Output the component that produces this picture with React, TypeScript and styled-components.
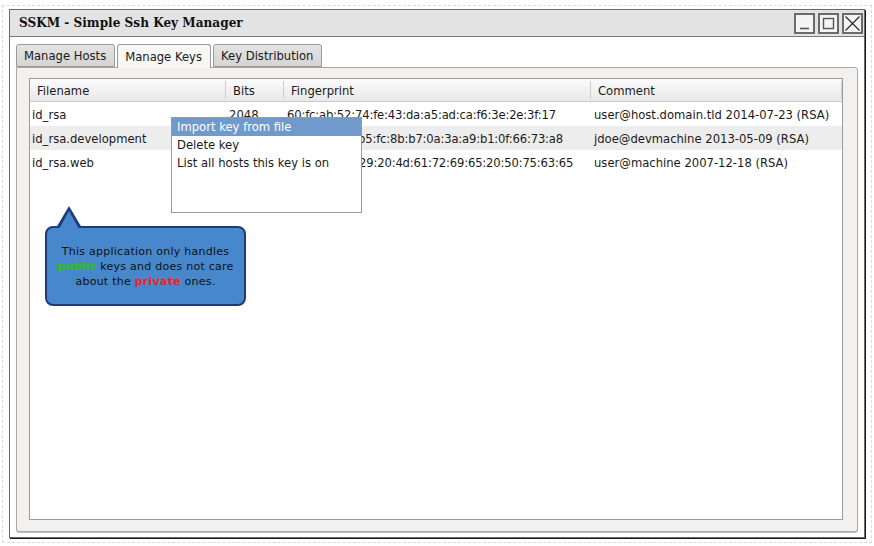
import styled, { createGlobalStyle } from "styled-components";

const GlobalStyle = createGlobalStyle`
    html, body {
        margin: 0;
        padding: 0;
        background: #ffffff;
    }
    body {
        font-family: "DejaVu Sans", "Noto Sans", sans-serif;
        color: #1a1a1a;
    }
`;

type KeyRow = {
    file: string;
    bits: string;
    fingerprint: string;
    comment: string;
};

const keys: KeyRow[] = [
    {
        file: "id_rsa",
        bits: "2048",
        fingerprint: "60:fc:ab:52:74:fe:43:da:a5:ad:ca:f6:3e:2e:3f:17",
        comment: "user@host.domain.tld 2014-07-23 (RSA)",
    },
    {
        file: "id_rsa.development",
        bits: "2048",
        fingerprint: "1e:9a:c4:07:b5:fc:8b:b7:0a:3a:a9:b1:0f:66:73:a8",
        comment: "jdoe@devmachine 2013-05-09 (RSA)",
    },
    {
        file: "id_rsa.web",
        bits: "1024",
        fingerprint: "4a:65:61:6e:29:20:4d:61:72:69:65:20:50:75:63:65",
        comment: "user@machine 2007-12-18 (RSA)",
    },
];

const columns = ["Filename", "Bits", "Fingerprint", "Comment"];
const menuItems = ["Import key from file", "Delete key", "List all hosts this key is on"];
const tabs = ["Manage Hosts", "Manage Keys", "Key Distribution"];

export default function App() {
    return (
        <>
            <GlobalStyle />
            <Page>
                <Frame>
                    <Window>
                        <TitleBar>
                            <Title>SSKM - Simple Ssh Key Manager</Title>
                            <WindowButtons>
                                <WinButton aria-label="minimize">
                                    <svg width="17" height="17" viewBox="0 0 17 17">
                                        <line x1="4" y1="13.5" x2="13" y2="13.5" stroke="#555" strokeWidth="1.6" />
                                    </svg>
                                </WinButton>
                                <WinButton aria-label="maximize">
                                    <svg width="17" height="17" viewBox="0 0 17 17">
                                        <rect x="3.5" y="3.5" width="10" height="10" fill="none" stroke="#555" strokeWidth="1.4" />
                                    </svg>
                                </WinButton>
                                <WinButton aria-label="close">
                                    <svg width="17" height="17" viewBox="0 0 17 17">
                                        <path d="M1.5 1.5 L15.5 15.5 M15.5 1.5 L1.5 15.5" stroke="#222" strokeWidth="1.1" />
                                    </svg>
                                </WinButton>
                            </WindowButtons>
                        </TitleBar>

                        <WindowBody>
                            <TabStrip>
                                {tabs.map((tab, index) => (
                                    <Tab key={tab} $active={index === 1}>{tab}</Tab>
                                ))}
                            </TabStrip>

                            <TabPanel>
                                <Table>
                                    <HeaderRow>
                                        {columns.map((col) => (
                                            <HeaderCell key={col}>{col}</HeaderCell>
                                        ))}
                                    </HeaderRow>
                                    {keys.map((row, index) => (
                                        <Row key={row.file} $striped={index % 2 === 1}>
                                            <Cell $first>{row.file}</Cell>
                                            <Cell>{row.bits}</Cell>
                                            <Cell $tight>{row.fingerprint}</Cell>
                                            <Cell>{row.comment}</Cell>
                                        </Row>
                                    ))}

                                    <ContextMenu>
                                        {menuItems.map((item, index) => (
                                            <MenuItem key={item} $highlighted={index === 0}>{item}</MenuItem>
                                        ))}
                                    </ContextMenu>

                                    <Callout>
                                        <CalloutText>
                                            This application only handles<br />
                                            <Public>public</Public> keys and does not care<br />
                                            about the <Private>private</Private> ones.
                                        </CalloutText>
                                    </Callout>
                                </Table>
                            </TabPanel>
                        </WindowBody>
                    </Window>
                </Frame>
            </Page>
        </>
    );
}

const Page = styled.div`
    width: 874px;
    height: 546px;
    box-sizing: border-box;
    padding: 5px 2px 3px 2px;
`;

const Frame = styled.div`
    height: 100%;
    box-sizing: border-box;
    border: 1px dashed #dcdcdc;
    padding: 3px 6px 3px 6px;
`;

const Window = styled.div`
    height: 529px;
    box-sizing: border-box;
    border: 1px solid #6a6a6a;
    box-shadow: 1px 1px 0 #1a1a1a;
    display: flex;
    flex-direction: column;
    background: #ffffff;
`;

const TitleBar = styled.div`
    height: 26px;
    flex-shrink: 0;
    display: flex;
    align-items: center;
    justify-content: space-between;
    background: #e3e3e3;
    border-bottom: 1px solid #7a7a7a;
    padding: 0 2px 0 9px;
`;

const Title = styled.span`
    font-family: "DejaVu Serif", "Liberation Serif", serif;
    font-weight: 700;
    font-size: 12.1px;
    color: #111;
`;

const WindowButtons = styled.div`
    display: flex;
    gap: 3px;
    margin-right: -1px;
`;

const WinButton = styled.div`
    width: 21px;
    height: 21px;
    box-sizing: border-box;
    border: 2px solid #6b6b6b;
    background: #f4f4f4;
    display: flex;
    align-items: center;
    justify-content: center;
`;

const WindowBody = styled.div`
    flex: 1;
    display: flex;
    flex-direction: column;
    padding: 7px 6px 5px 6px;
    min-height: 0;
`;

const TabStrip = styled.div`
    display: flex;
    gap: 2px;
    height: 23px;
    flex-shrink: 0;
    position: relative;
    z-index: 1;
`;

const Tab = styled.div<{ $active: boolean }>`
    box-sizing: border-box;
    height: ${(p) => (p.$active ? "24px" : "23px")};
    padding: 0 8px 0 7px;
    display: flex;
    align-items: center;
    font-size: 11.6px;
    color: #1a1a1a;
    border: 1px solid #9a9a9a;
    border-bottom: ${(p) => (p.$active ? "none" : "1px solid #9a9a9a")};
    border-radius: 3px 3px 0 0;
    background: ${(p) =>
        p.$active ? "#f7f7f5" : "linear-gradient(#e4e4e4, #d4d4d4)"};
`;

const TabPanel = styled.div`
    flex: 1;
    min-height: 0;
    display: flex;
    box-sizing: border-box;
    border: 1px solid #a8a8a8;
    border-radius: 0 3px 3px 3px;
    background: #f2f1ef;
    box-shadow: 0 1px 0 #c4c4c4;
    padding: 10px 14px 11px 12px;
`;

const Table = styled.div`
    flex: 1;
    position: relative;
    border: 1px solid #9c9c9c;
    background: #ffffff;
`;

const HeaderRow = styled.div`
    display: grid;
    grid-template-columns: 196px 58px 307px 251px 1fr;
    height: 22px;
    background: linear-gradient(#fbfbfb, #e9e9e9);
    border-bottom: 1px solid #c9c9c9;
`;

const HeaderCell = styled.div`
    display: flex;
    align-items: center;
    padding-left: 7px;
    padding-top: 1px;
    font-size: 11.6px;
    color: #1a1a1a;
    box-shadow: inset -1px 0 0 #cfcfcf;
    margin: 2px 0;
`;

const Row = styled.div<{ $striped: boolean }>`
    display: grid;
    grid-template-columns: 196px 58px 307px 251px 1fr;
    height: 24px;
    background: ${(p) => (p.$striped ? "#ededed" : "#ffffff")};
`;

const Cell = styled.div<{ $first?: boolean; $tight?: boolean }>`
    display: flex;
    align-items: center;
    padding-left: ${(p) => (p.$first ? "2px" : "3px")};
    padding-top: 1px;
    font-size: 11.6px;
    letter-spacing: ${(p) => (p.$tight ? "-0.17px" : "0")};
    color: #1a1a1a;
    white-space: nowrap;
    overflow: hidden;
`;

const ContextMenu = styled.div`
    position: absolute;
    left: 141px;
    top: 38px;
    width: 191px;
    height: 96px;
    box-sizing: border-box;
    border: 1px solid #9a9a9a;
    background: #ffffff;
    display: flex;
    flex-direction: column;
`;

const MenuItem = styled.div<{ $highlighted: boolean }>`
    height: 18px;
    display: flex;
    align-items: center;
    padding-left: 5px;
    font-size: 11.6px;
    color: ${(p) => (p.$highlighted ? "#ffffff" : "#1a1a1a")};
    background: ${(p) => (p.$highlighted ? "#7099cc" : "transparent")};
`;

const Callout = styled.div`
    position: absolute;
    left: 15px;
    top: 147px;
    width: 201px;
    height: 80px;
    box-sizing: border-box;
    border: 2px solid #1f3b7b;
    border-radius: 8px;
    background: #4688cb;
    display: flex;
    align-items: center;
    justify-content: center;

    &::before {
        content: "";
        position: absolute;
        left: 9px;
        top: -22px;
        border-left: 13px solid transparent;
        border-right: 13px solid transparent;
        border-bottom: 22px solid #1f3b7b;
    }

    &::after {
        content: "";
        position: absolute;
        left: 12px;
        top: -17px;
        border-left: 10px solid transparent;
        border-right: 10px solid transparent;
        border-bottom: 18px solid #4688cb;
    }
`;

const CalloutText = styled.div`
    text-align: center;
    font-size: 11px;
    line-height: 15px;
    color: #111;
    letter-spacing: 0.25px;
`;

const Public = styled.span`
    color: #33c200;
    font-weight: 700;
`;

const Private = styled.span`
    color: #ff1a1a;
    font-weight: 700;
`;
